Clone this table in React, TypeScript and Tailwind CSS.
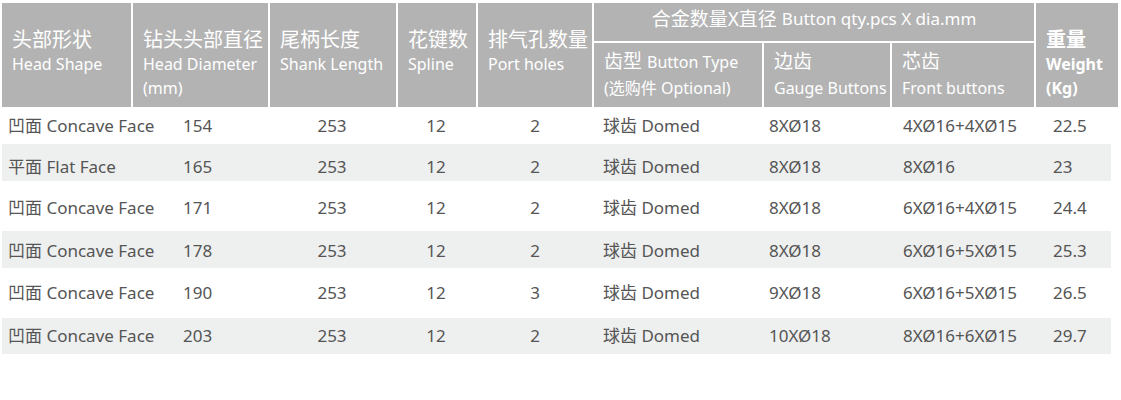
import React from "react"

const FONT = { fontFamily: '"Noto Sans", "Noto Sans CJK SC", sans-serif' }

type Row = {
  shape: string
  dia: string
  shank: string
  spline: string
  port: string
  type: string
  gauge: string
  front: string
  weight: string
  cls: string
}

const rows: Row[] = [
  { shape: "凹面 Concave Face", dia: "154", shank: "253", spline: "12", port: "2", type: "球齿 Domed", gauge: "8XØ18", front: "4XØ16+4XØ15", weight: "22.5", cls: "h-[37px]" },
  { shape: "平面 Flat Face", dia: "165", shank: "253", spline: "12", port: "2", type: "球齿 Domed", gauge: "8XØ18", front: "8XØ16", weight: "23", cls: "h-[37px] pt-[8px] bg-[#eeefef]" },
  { shape: "凹面 Concave Face", dia: "171", shank: "253", spline: "12", port: "2", type: "球齿 Domed", gauge: "8XØ18", front: "6XØ16+4XØ15", weight: "24.4", cls: "h-[50px] pt-[3px]" },
  { shape: "凹面 Concave Face", dia: "178", shank: "253", spline: "12", port: "2", type: "球齿 Domed", gauge: "8XØ18", front: "6XØ16+5XØ15", weight: "25.3", cls: "h-[37px] pt-[3px] bg-[#eeefef]" },
  { shape: "凹面 Concave Face", dia: "190", shank: "253", spline: "12", port: "3", type: "球齿 Domed", gauge: "9XØ18", front: "6XØ16+5XØ15", weight: "26.5", cls: "h-[50px]" },
  { shape: "凹面 Concave Face", dia: "203", shank: "253", spline: "12", port: "2", type: "球齿 Domed", gauge: "10XØ18", front: "8XØ16+6XØ15", weight: "29.7", cls: "h-[36px] bg-[#eeefef]" },
]

function Head({ zh, en, extra, className = "" }: { zh: string; en: string; extra?: string; className?: string }) {
  return (
    <div className={"row-span-2 bg-[#b3b3b3] pl-[10px] pt-[24px] text-white " + className}>
      <div className="text-[20px] leading-[26px]">{zh}</div>
      <div className="text-[16px] leading-[22px]">{en}</div>
      {extra && <div className="mt-[2px] text-[16px] leading-[22px]">{extra}</div>}
    </div>
  )
}

function SubHead({ top, bottom }: { top: React.ReactNode; bottom: React.ReactNode }) {
  return (
    <div className="bg-[#b3b3b3] pl-[10px] pt-[5px] text-white">
      <div className="leading-[26px]">{top}</div>
      <div className="mt-[1px] text-[16px] leading-[24px]">{bottom}</div>
    </div>
  )
}

export default function App() {
  return (
    <div className="h-[400px] w-[1121px] bg-white pl-[2px] pt-[3px]" style={FONT}>
      <div className="grid grid-cols-[129px_135px_126px_78px_114px_168px_126px_142px_82px] grid-rows-[38px_64px] gap-[2px]">
        <Head zh="头部形状" en="Head Shape" />
        <Head zh="钻头头部直径" en="Head Diameter" extra="(mm)" />
        <Head zh="尾柄长度" en="Shank Length" />
        <Head zh="花键数" en="Spline" />
        <Head zh="排气孔数量" en="Port holes" />
        <div className="col-span-3 flex items-center justify-center bg-[#b3b3b3] pb-[6px] text-white">
          <span className="text-[19px]">合金数量X直径</span>
          <span className="ml-[5px] text-[17px]">Button qty.pcs X dia.mm</span>
        </div>
        <Head zh="重量" en="Weight" extra="(Kg)" className="col-start-9 row-start-1 font-bold" />
        <SubHead
          top={
            <>
              <span className="text-[19px]">齿型</span>
              <span className="ml-[5px] text-[16px]">Button Type</span>
            </>
          }
          bottom="(选购件 Optional)"
        />
        <SubHead top={<span className="text-[19px]">边齿</span>} bottom="Gauge Buttons" />
        <SubHead top={<span className="text-[19px]">芯齿</span>} bottom="Front buttons" />
      </div>

      <div className="w-[1109px] text-[17px] text-[#555555]">
        {rows.map((r, i) => (
          <div key={i} className={"flex items-center " + r.cls}>
            <div className="w-[175px] pl-[6px]">{r.shape}</div>
            <div className="w-[88px] pl-[6px]">{r.dia}</div>
            <div className="w-[134px] text-center">{r.shank}</div>
            <div className="w-[74px] text-center">{r.spline}</div>
            <div className="w-[124px] text-center">{r.port}</div>
            <div className="w-[166px] pl-[6px]">{r.type}</div>
            <div className="w-[134px] pl-[6px]">{r.gauge}</div>
            <div className="w-[150px] pl-[6px]">{r.front}</div>
            <div className="flex-1 pl-[6px]">{r.weight}</div>
          </div>
        ))}
      </div>
    </div>
  )
}
